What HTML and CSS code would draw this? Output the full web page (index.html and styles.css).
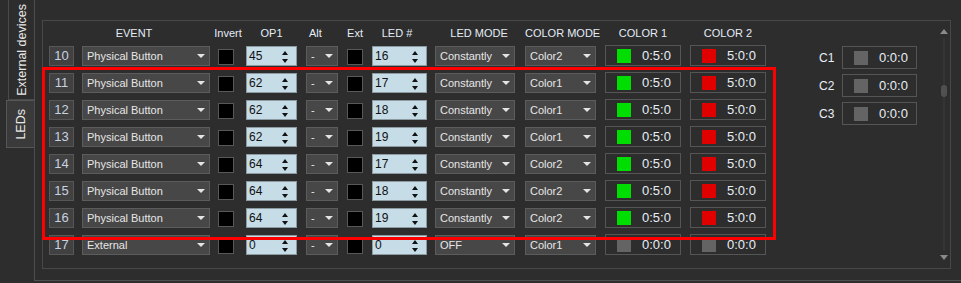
FILE: index.html
```html
<!DOCTYPE html>
<html lang="en">
<head>
    <meta charset="UTF-8">
    <meta name="viewport" content="width=device-width, initial-scale=1.0">
    <link rel="stylesheet" href="styles.css">
</head>
<body>

    <div class="window">
        <div class="tabs">
            <div class="tab"><span>External devices</span></div>
            <div class="tab active"><span>LEDs</span></div>
        </div>
        <div class="pane">
            <div class="group">
                <div class="table">
                    <div class="head"></div>
                    <div class="head event">EVENT</div>
                    <div class="head invert">Invert</div>
                    <div class="head op-head">OP1</div>
                    <div class="head alt">Alt</div>
                    <div class="head ext">Ext</div>
                    <div class="head led-head">LED #</div>
                    <div class="head mode-head">LED MODE</div>
                    <div class="head cmode-head">COLOR MODE</div>
                    <div class="head color-head">COLOR 1</div>
                    <div class="head color-head">COLOR 2</div>

                    <div class="num">10</div>
                    <div class="combo event-box">Physical Button</div>
                    <div class="check"></div>
                    <div class="spin op">45</div>
                    <div class="combo alt-box">-</div>
                    <div class="check"></div>
                    <div class="spin led">16</div>
                    <div class="combo mode">Constantly</div>
                    <div class="combo cmode">Color2</div>
                    <div class="color"><i class="green"></i>0:5:0</div>
                    <div class="color"><i class="red"></i>5:0:0</div>

                    <div class="num">11</div>
                    <div class="combo event-box">Physical Button</div>
                    <div class="check"></div>
                    <div class="spin op">62</div>
                    <div class="combo alt-box">-</div>
                    <div class="check"></div>
                    <div class="spin led">17</div>
                    <div class="combo mode">Constantly</div>
                    <div class="combo cmode">Color1</div>
                    <div class="color"><i class="green"></i>0:5:0</div>
                    <div class="color"><i class="red"></i>5:0:0</div>

                    <div class="num">12</div>
                    <div class="combo event-box">Physical Button</div>
                    <div class="check"></div>
                    <div class="spin op">62</div>
                    <div class="combo alt-box">-</div>
                    <div class="check"></div>
                    <div class="spin led">18</div>
                    <div class="combo mode">Constantly</div>
                    <div class="combo cmode">Color1</div>
                    <div class="color"><i class="green"></i>0:5:0</div>
                    <div class="color"><i class="red"></i>5:0:0</div>

                    <div class="num">13</div>
                    <div class="combo event-box">Physical Button</div>
                    <div class="check"></div>
                    <div class="spin op">62</div>
                    <div class="combo alt-box">-</div>
                    <div class="check"></div>
                    <div class="spin led">19</div>
                    <div class="combo mode">Constantly</div>
                    <div class="combo cmode">Color1</div>
                    <div class="color"><i class="green"></i>0:5:0</div>
                    <div class="color"><i class="red"></i>5:0:0</div>

                    <div class="num">14</div>
                    <div class="combo event-box">Physical Button</div>
                    <div class="check"></div>
                    <div class="spin op">64</div>
                    <div class="combo alt-box">-</div>
                    <div class="check"></div>
                    <div class="spin led">17</div>
                    <div class="combo mode">Constantly</div>
                    <div class="combo cmode">Color2</div>
                    <div class="color"><i class="green"></i>0:5:0</div>
                    <div class="color"><i class="red"></i>5:0:0</div>

                    <div class="num">15</div>
                    <div class="combo event-box">Physical Button</div>
                    <div class="check"></div>
                    <div class="spin op">64</div>
                    <div class="combo alt-box">-</div>
                    <div class="check"></div>
                    <div class="spin led">18</div>
                    <div class="combo mode">Constantly</div>
                    <div class="combo cmode">Color2</div>
                    <div class="color"><i class="green"></i>0:5:0</div>
                    <div class="color"><i class="red"></i>5:0:0</div>

                    <div class="num">16</div>
                    <div class="combo event-box">Physical Button</div>
                    <div class="check"></div>
                    <div class="spin op">64</div>
                    <div class="combo alt-box">-</div>
                    <div class="check"></div>
                    <div class="spin led">19</div>
                    <div class="combo mode">Constantly</div>
                    <div class="combo cmode">Color2</div>
                    <div class="color"><i class="green"></i>0:5:0</div>
                    <div class="color"><i class="red"></i>5:0:0</div>

                    <div class="num">17</div>
                    <div class="combo event-box">External</div>
                    <div class="check"></div>
                    <div class="spin op">0</div>
                    <div class="combo alt-box">-</div>
                    <div class="check"></div>
                    <div class="spin led">0</div>
                    <div class="combo mode">OFF</div>
                    <div class="combo cmode">Color1</div>
                    <div class="color"><i class="gray"></i>0:0:0</div>
                    <div class="color"><i class="gray"></i>0:0:0</div>
                </div>

                <div class="cpanel">
                    <div class="clabel">C1</div>
                    <div class="color cbox"><i class="gray"></i>0:0:0</div>
                    <div class="clabel">C2</div>
                    <div class="color cbox"><i class="gray"></i>0:0:0</div>
                    <div class="clabel">C3</div>
                    <div class="color cbox"><i class="gray"></i>0:0:0</div>
                </div>

                <div class="scrollbar">
                    <div class="arrow-up"></div>
                    <div class="track"><div class="handle"></div></div>
                    <div class="arrow-down"></div>
                </div>
            </div>
        </div>
    </div>

    <div class="highlight"></div>

</body>
</html>
```

FILE: styles.css
```css
body {
    margin: 0;
    width: 961px;
    height: 283px;
    overflow: hidden;
    background-color: #2d2d2d;
    font-family: "Liberation Sans", Arial, sans-serif;
    font-size: 12px;
    color: #e6e6e6;
    position: relative;
}
.window {
    display: flex;
    height: 281px;
}
.tabs {
    width: 34px;
    display: flex;
    flex-direction: column;
    align-items: flex-end;
}
.tab {
    width: 26px;
    height: 100px;
    box-sizing: border-box;
    border-left: 1px solid #4a4a4a;
    border-bottom: 1px solid #4a4a4a;
    display: flex;
    align-items: center;
    justify-content: center;
}
.tab span {
    writing-mode: vertical-rl;
    transform: rotate(180deg);
    font-size: 12.5px;
    color: #e8e8e8;
    white-space: nowrap;
}
.tab.active {
    width: 28px;
    height: 48px;
    background-color: #3a3a3a;
    border: 1px solid #565656;
    border-right: none;
}
.pane {
    flex: 1;
    border-left: 1px solid #4e4e4e;
    border-bottom: 1px solid #4e4e4e;
    padding: 20px 10px 11px 7px;
}
.group {
    height: 249px;
    box-sizing: border-box;
    border: 1px solid #484848;
    display: flex;
    padding-left: 6px;
}
.table {
    display: grid;
    grid-template-columns: 33px 136px 28px 60px 41px 25px 63px 90px 80px 85px 76px;
    grid-template-rows: 25px;
    grid-auto-rows: 27px;
    align-items: start;
}
.head {
    line-height: 25px;
    font-size: 11px;
    color: #e4ecf6;
    text-align: center;
    white-space: nowrap;
}
.head.event { width: 104px; }
.head.invert { width: 40px; margin-left: -10px; }
.head.op-head { width: 51px; }
.head.alt { width: 32px; text-align: left; padding-left: 3px; }
.head.ext { width: 16px; }
.head.led-head { width: 50px; }
.head.mode-head { width: 88px; }
.head.cmode-head { width: 71px; }
.head.color-head { width: 76px; }
.num {
    width: 25px;
    height: 20px;
    box-sizing: border-box;
    background-color: #414141;
    border: 1px solid #575757;
    color: #c8d2e2;
    font-size: 13px;
    line-height: 18px;
    text-align: center;
}
.combo {
    height: 20px;
    box-sizing: border-box;
    background-color: #474747;
    border: 1px solid #5c5c5c;
    padding-left: 4px;
    font-size: 11px;
    line-height: 18px;
    position: relative;
    white-space: nowrap;
}
.combo::after {
    content: "";
    position: absolute;
    right: 4px;
    top: 7px;
    border-left: 4px solid transparent;
    border-right: 4px solid transparent;
    border-top: 4px solid #e4e4e4;
}
.event-box { width: 128px; }
.alt-box { width: 32px; }
.mode { width: 80px; }
.cmode { width: 71px; }
.check {
    width: 16px;
    height: 16px;
    box-sizing: border-box;
    margin-top: 3px;
    background-color: #000;
    border: 1px solid #585858;
}
.spin {
    height: 20px;
    box-sizing: border-box;
    background-color: #c6dce7;
    border: 1px solid #8c9aa2;
    color: #111;
    padding-left: 2px;
    line-height: 18px;
    position: relative;
}
.spin::before,
.spin::after {
    content: "";
    position: absolute;
    right: 8px;
    border-left: 3.5px solid transparent;
    border-right: 3.5px solid transparent;
}
.spin::before {
    top: 4px;
    border-bottom: 4px solid #111;
}
.spin::after {
    top: 12px;
    border-top: 4px solid #111;
}
.op { width: 51px; }
.led { width: 55px; }
.color {
    width: 76px;
    height: 21px;
    margin-top: -1px;
    box-sizing: border-box;
    border: 1px solid #555;
    display: flex;
    align-items: center;
    padding-left: 11px;
    font-size: 13px;
    color: #e8eef6;
}
.color i {
    width: 14px;
    height: 14px;
    margin-right: 11px;
}
.green { background-color: #00dd00; }
.red { background-color: #e00000; }
.gray { background-color: #646464; }
.cpanel {
    margin-left: 53px;
    padding-top: 25px;
    display: grid;
    grid-template-columns: 23px 75px;
    grid-auto-rows: 23px;
    row-gap: 5px;
    align-items: center;
    align-self: start;
}
.clabel {
    font-size: 12px;
    color: #e8eef6;
}
.cbox {
    width: 75px;
    height: 23px;
    margin-top: 0;
}
.scrollbar {
    margin-left: auto;
    margin-right: 2px;
    width: 8px;
    display: flex;
    flex-direction: column;
    align-items: center;
    padding-top: 8px;
    padding-bottom: 8px;
}
.arrow-up {
    border-left: 4px solid transparent;
    border-right: 4px solid transparent;
    border-bottom: 5px solid #8a8a8a;
}
.arrow-down {
    border-left: 4px solid transparent;
    border-right: 4px solid transparent;
    border-top: 5px solid #8a8a8a;
}
.track {
    flex: 1;
    width: 2px;
    margin: 4px 0;
    background-color: #353535;
}
.handle {
    width: 6px;
    height: 12px;
    margin-left: -2px;
    margin-top: 47px;
    border-radius: 3px;
    background-color: #505050;
}
.highlight {
    position: absolute;
    left: 42px;
    top: 67px;
    width: 734px;
    height: 173px;
    box-sizing: border-box;
    border: 3px solid #ff0000;
}
```
